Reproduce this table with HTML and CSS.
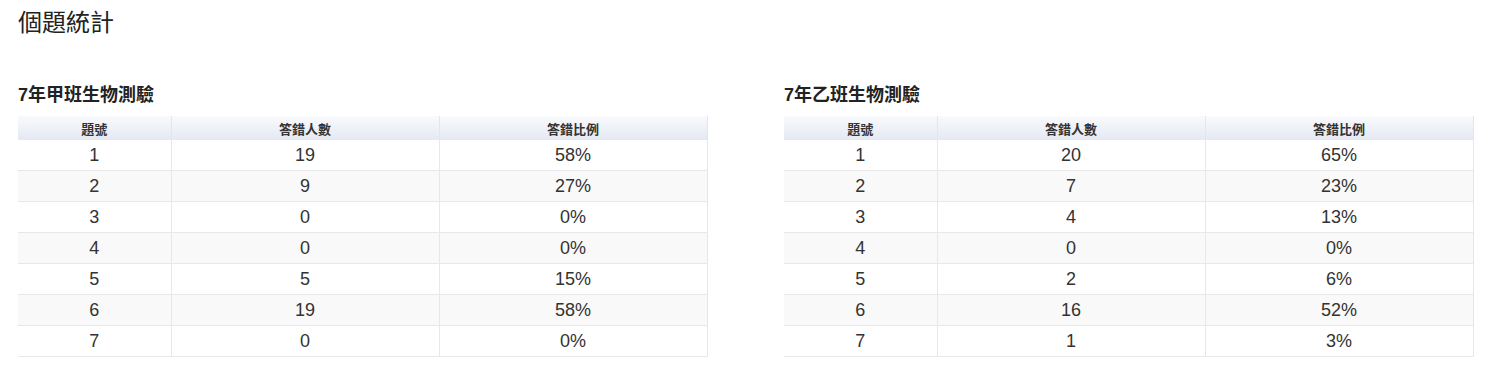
FILE: index.html
```html
<!DOCTYPE html>
<html lang="zh-Hant">
<head>
<meta charset="utf-8">
<title>個題統計</title>
<link rel="stylesheet" href="styles.css">
</head>
<body>
<div class="page">
  <h1 class="title">個題統計</h1>
  <div class="grid">
    <section class="panel">
      <h2 class="subtitle">7年甲班生物測驗</h2>
      <table class="stats">
        <colgroup><col class="c1"><col class="c2"><col class="c3"></colgroup>
        <thead><tr><th>題號</th><th>答錯人數</th><th>答錯比例</th></tr></thead>
        <tbody>
          <tr><td>1</td><td>19</td><td>58%</td></tr>
          <tr><td>2</td><td>9</td><td>27%</td></tr>
          <tr><td>3</td><td>0</td><td>0%</td></tr>
          <tr><td>4</td><td>0</td><td>0%</td></tr>
          <tr><td>5</td><td>5</td><td>15%</td></tr>
          <tr><td>6</td><td>19</td><td>58%</td></tr>
          <tr><td>7</td><td>0</td><td>0%</td></tr>
        </tbody>
      </table>
    </section>
    <section class="panel">
      <h2 class="subtitle">7年乙班生物測驗</h2>
      <table class="stats">
        <colgroup><col class="c1"><col class="c2"><col class="c3"></colgroup>
        <thead><tr><th>題號</th><th>答錯人數</th><th>答錯比例</th></tr></thead>
        <tbody>
          <tr><td>1</td><td>20</td><td>65%</td></tr>
          <tr><td>2</td><td>7</td><td>23%</td></tr>
          <tr><td>3</td><td>4</td><td>13%</td></tr>
          <tr><td>4</td><td>0</td><td>0%</td></tr>
          <tr><td>5</td><td>2</td><td>6%</td></tr>
          <tr><td>6</td><td>16</td><td>52%</td></tr>
          <tr><td>7</td><td>1</td><td>3%</td></tr>
        </tbody>
      </table>
    </section>
  </div>
</div>
</body>
</html>
```
FILE: styles.css
```css
html, body {
  margin: 0;
  padding: 0;
  background: #ffffff;
}
body {
  font-family: "Liberation Sans", "Noto Sans CJK TC", sans-serif;
  color: #333333;
}
.page {
  padding: 8px 16px 0 18px;
}
.title {
  margin: 0;
  font-size: 24px;
  line-height: 30px;
  font-weight: normal;
  color: #222222;
}
.grid {
  margin-top: 45px;
  display: grid;
  grid-template-columns: 690px 690px;
  column-gap: 76px;
}
.subtitle {
  margin: 0 0 9px 0;
  font-size: 18px;
  line-height: 24px;
  font-weight: bold;
  color: #222222;
}
.stats {
  width: 689px;
  border-collapse: collapse;
  table-layout: fixed;
  border-right: 1px solid #e6e6e6;
}
.c1 { width: 153px; }
.c2 { width: 268px; }
.c3 { width: 268px; }
.stats th {
  height: 24px;
  padding: 0;
  font-size: 13px;
  font-weight: bold;
  color: #333333;
  text-align: center;
  background: linear-gradient(to bottom, #f9fafd 0%, #e4e8f2 100%);
  border-left: 1px solid #e4e6ec;
}
.stats th:first-child,
.stats td:first-child {
  border-left: none;
}
.stats td {
  height: 30px;
  padding: 0;
  font-size: 18px;
  text-align: center;
  border-bottom: 1px solid #e8e8e8;
  border-left: 1px solid #e8e8e8;
}
.stats tbody tr:nth-child(even) td {
  background: #f9f9f9;
}
```
